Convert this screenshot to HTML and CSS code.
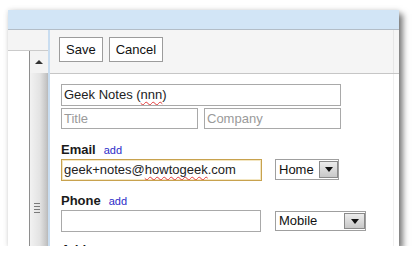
FILE: index.html
```html
<!DOCTYPE html>
<html>
<head>
<meta charset="utf-8">
<link rel="stylesheet" href="styles.css">
</head>
<body>
<div class="window">
  <div class="titlebar"></div>
  <div class="main">
    <div class="side">
      <div class="side-head"></div>
      <div class="side-body">
        <div class="side-list"></div>
        <div class="scrollbar">
          <div class="scroll-btn"><span class="arrow-up"></span></div>
          <div class="thumb">
            <div class="grip"><i></i><i></i><i></i><i></i></div>
          </div>
        </div>
      </div>
    </div>
    <div class="pane">
      <div class="toolbar">
        <button class="btn">Save</button>
        <button class="btn">Cancel</button>
      </div>
      <div class="form">
        <div class="field name">Geek Notes (<span class="typo">nnn</span>)</div>
        <div class="row2">
          <div class="field half placeholder">Title</div>
          <div class="field half placeholder">Company</div>
        </div>

        <div class="section email-section">
          <div class="label">Email<a class="add">add</a></div>
          <div class="row">
            <div class="field email focus">geek+notes@<span class="typo">howtogeek</span>.com</div>
            <div class="select home"><span class="select-text">Home</span><span class="select-btn"><span class="arrow-down"></span></span></div>
          </div>
        </div>

        <div class="section phone-section">
          <div class="label">Phone<a class="add">add</a></div>
          <div class="row phone-row">
            <div class="field phone"></div>
            <div class="select mobile"><span class="select-text">Mobile</span><span class="select-btn"><span class="arrow-down"></span></span></div>
          </div>
        </div>

        <div class="section address-section">
          <div class="label">Address</div>
        </div>
      </div>
    </div>
  </div>
</div>
</body>
</html>
```

FILE: styles.css
```css
html, body {
  margin: 0;
  padding: 0;
  background: #ffffff;
}

body {
  padding: 10px 0 0 8px;
  font-family: "Liberation Sans", Arial, sans-serif;
}

.window {
  width: 391px;
  height: 236px;
  overflow: hidden;
  display: flex;
  flex-direction: column;
  background: #fff;
  box-shadow: 4px 4px 6px rgba(0, 0, 0, 0.5), 0 0 5px rgba(0, 0, 0, 0.12);
}

.titlebar {
  height: 19px;
  flex: none;
  background: #d2e5f6;
  border-bottom: 1px solid #b3bdc7;
}

.main {
  flex: 1;
  display: flex;
  min-height: 0;
}

/* left column */
.side {
  width: 40px;
  flex: none;
  display: flex;
  flex-direction: column;
}

.side-head {
  height: 20px;
  flex: none;
  background: #f4f4f4;
  border-bottom: 1px solid #cbcbcb;
}

.side-body {
  flex: 1;
  display: flex;
}

.side-list {
  width: 21px;
  background: #fff;
}

.scrollbar {
  width: 18px;
  border-left: 1px solid #8e8e8e;
  background: #f3f3f3;
  display: flex;
  flex-direction: column;
}

.scroll-btn {
  height: 22px;
  flex: none;
  display: flex;
  align-items: center;
  justify-content: center;
}

.arrow-up {
  width: 0;
  height: 0;
  border-left: 4px solid transparent;
  border-right: 4px solid transparent;
  border-bottom: 4px solid #333;
}

.thumb {
  flex: 1;
  background: linear-gradient(to right, #f2f2f2 0%, #e3e3e3 55%, #c6c6c6 90%, #b8b8b8 100%);
  padding: 130px 0 0 4px;
}

.grip i {
  display: block;
  width: 6px;
  height: 1px;
  background: #7a7a7a;
  margin-bottom: 2px;
}

/* right pane */
.pane {
  flex: 1;
  display: flex;
  flex-direction: column;
  border-left: 2px solid #c9ddf0;
  min-width: 0;
}

.toolbar {
  height: 44px;
  box-sizing: border-box;
  flex: none;
  background: linear-gradient(to left, #f5f5f5 0 5px, #e6e6e6 5px 6px, #f5f5f5 6px);
  border-bottom: 1px solid #c6c6c6;
  padding: 7px 0 0 9px;
  display: flex;
  align-items: flex-start;
  gap: 6px;
}

.btn {
  height: 25px;
  margin: 0;
  padding: 0 6px;
  border: 1px solid #9c9c9c;
  border-radius: 0;
  background: #fff;
  color: #111;
  font-family: "Liberation Sans", Arial, sans-serif;
  font-size: 13px;
}

.form {
  flex: 1;
  padding: 10px 0 0 11px;
  background: linear-gradient(to left, #fff 0 5px, #f0f0f0 5px 6px, #fff 6px);
}

.field {
  box-sizing: border-box;
  height: 22px;
  border: 1px solid #a9a9a9;
  background: #fff;
  padding: 0 2px;
  font-size: 13px;
  line-height: 20px;
  color: #222;
  white-space: nowrap;
  overflow: hidden;
}

.name {
  width: 280px;
}

.row2 {
  display: flex;
  gap: 6px;
  margin-top: 2px;
}

.half {
  width: 137px;
  height: 21px;
  line-height: 19px;
}

.placeholder {
  color: #9a9a9a;
}

.typo {
  text-decoration: underline wavy #e23b3b;
  text-decoration-thickness: 1px;
  text-decoration-skip-ink: none;
  text-underline-offset: 2px;
}

.section {
  display: flex;
  flex-direction: column;
}

.email-section {
  margin-top: 13px;
}

.phone-section {
  margin-top: 12px;
}

.address-section {
  margin-top: 10px;
}

.label {
  font-size: 13px;
  font-weight: bold;
  line-height: 15px;
  color: #1a1a1a;
  margin-bottom: 1px;
}

.add {
  font-size: 11px;
  font-weight: normal;
  color: #2b2bc8;
  margin-left: 8px;
}

.row {
  display: flex;
  align-items: flex-start;
  gap: 13px;
}

.phone-row {
  gap: 14px;
}

.email {
  width: 201px;
}

.focus {
  border-color: #c8a24e;
  box-shadow: inset 0 0 0 1px #f3e6c2;
}

.phone {
  width: 200px;
}

.select {
  box-sizing: border-box;
  display: flex;
  align-items: stretch;
  border: 1px solid #9f9f9f;
  padding: 1px 0 1px 1px;
  background: #fff;
}

.home {
  width: 64px;
  height: 21px;
}

.mobile {
  width: 91px;
  height: 20px;
  margin-top: 1px;
}

.select-text {
  flex: 1;
  padding-left: 2px;
  font-size: 13px;
  line-height: 17px;
  color: #111;
}

.mobile .select-text {
  line-height: 16px;
}

.select-btn {
  box-sizing: border-box;
  width: 19px;
  border: 1px solid #8a8a8a;
  background: linear-gradient(#ececec, #c8c8c8);
  display: flex;
  align-items: center;
  justify-content: center;
}

.mobile .select-btn {
  width: 21px;
}

.arrow-down {
  width: 0;
  height: 0;
  border-left: 4px solid transparent;
  border-right: 4px solid transparent;
  border-top: 5px solid #111;
}
```
